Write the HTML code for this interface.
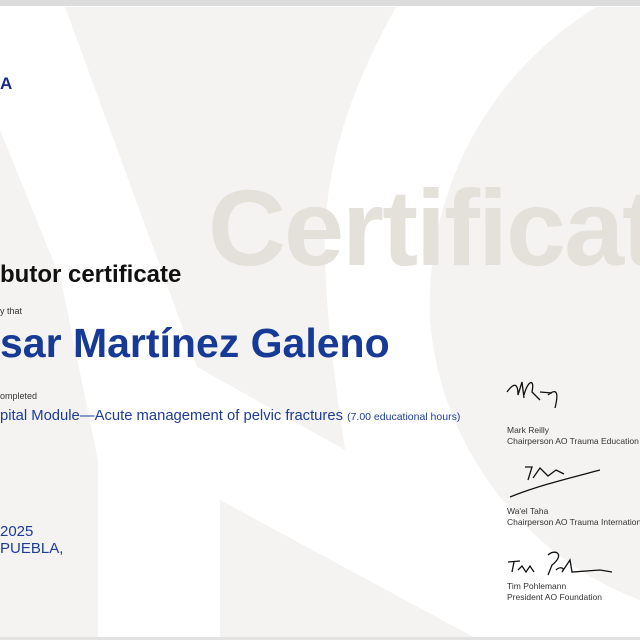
<!DOCTYPE html>
<html><head><meta charset="utf-8"><style>
body{margin:0;width:640px;height:640px;overflow:hidden;position:relative;font-family:"Liberation Sans",sans-serif;background:#fff}
.t{position:absolute;white-space:nowrap;line-height:1}
.clip{position:absolute;left:0;top:0;width:640px;height:640px;overflow:hidden}
</style></head><body>
<svg width="640" height="640" style="position:absolute;left:0;top:0">
<rect width="640" height="640" fill="#fff"/>
<g fill="#f4f3f1">
<polygon points="0,130 61,280 98,460 98,640 0,640"/>
<path d="M65,7 L396,7 C350,90 322,170 325,260 C328,340 338,400 345,450 L197,367 Z"/>
<polygon points="220,500 220,640 479,640"/>
<path d="M596,7 L640,7 L640,600 C530,560 440,450 430,320 C425,200 480,80 596,7 Z"/>
</g>
<rect x="0" y="0" width="640" height="6" fill="#dcdcdc"/>
<rect x="0" y="637" width="640" height="3" fill="#e2e2e2"/>
<g fill="none" stroke="#111" stroke-width="1.3">
<path d="M507,392 C512,385 518,380 518,395 L522,382 L524,398 M524,395 C528,380 535,378 532,392 L540,400 M540,392 L552,393 M548,395 C554,390 560,388 555,408"/>
<path d="M510,497 C540,485 570,478 600,470 M525,467 L532,467 L528,480 M533,478 L540,468 L548,476 L556,470 L564,474"/>
<path d="M508,562 L520,561 M514,562 L512,572 M518,570 L522,566 L526,572 L530,566 L534,572 M548,555 C556,548 565,555 552,565 L548,575 M556,570 C560,566 566,568 562,572 L570,560 L572,572 L600,570 L612,572"/>
</g>
</svg>
<div class="clip">
<div class="t" style="left:208px;top:174px;font-size:108px;font-weight:bold;color:#e4e0da;letter-spacing:-2px">Certificate</div>
<div class="t" style="left:507px;top:437px;font-size:8.5px;color:#333">Chairperson AO Trauma Education</div>
<div class="t" style="left:507px;top:518px;font-size:8.5px;color:#333">Chairperson AO Trauma International</div>
</div>
<div class="t" style="left:0;top:75px;font-size:17px;font-weight:bold;color:#1a2a8a">A</div>
<div class="t" style="left:0;top:263px;font-size:24px;font-weight:bold;color:#111">butor certificate</div>
<div class="t" style="left:0;top:307px;font-size:9px;color:#333">y that</div>
<div class="t" style="left:0;top:323px;font-size:41px;font-weight:bold;color:#163a96">sar Martínez Galeno</div>
<div class="t" style="left:0;top:392px;font-size:9px;color:#333">ompleted</div>
<div class="t" style="left:0;top:409px;font-size:14.8px;color:#1c3c98">pital Module—Acute management of pelvic fractures <span style="font-size:10.5px">(7.00 educational hours)</span></div>
<div class="t" style="left:0;top:524px;font-size:15px;color:#1c3c98">2025</div>
<div class="t" style="left:0;top:541px;font-size:15px;color:#1c3c98">PUEBLA,</div>
<div class="t" style="left:507px;top:426px;font-size:8.5px;color:#333">Mark Reilly</div>
<div class="t" style="left:507px;top:507px;font-size:8.5px;color:#333">Wa'el Taha</div>
<div class="t" style="left:507px;top:582px;font-size:8.5px;color:#333">Tim Pohlemann</div>
<div class="t" style="left:507px;top:593px;font-size:8.5px;color:#333">President AO Foundation</div>
</body></html>
